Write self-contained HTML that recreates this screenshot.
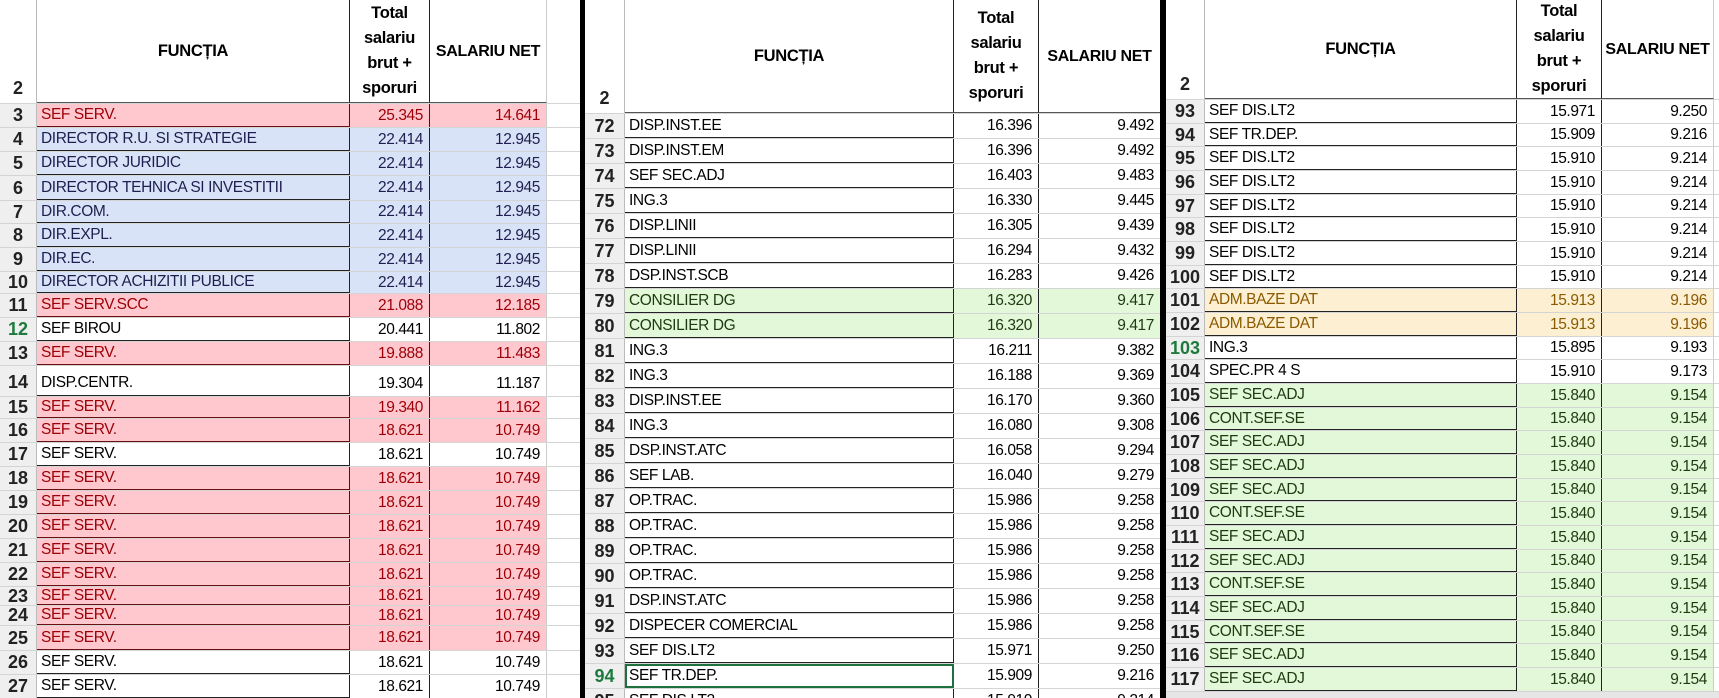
<!DOCTYPE html>
<html><head><meta charset="utf-8"><style>
*{margin:0;padding:0;box-sizing:border-box}
body{width:1719px;height:698px;overflow:hidden;background:#fff;font-family:"Liberation Sans",sans-serif;position:relative}
.p{position:absolute;top:0;height:698px;overflow:hidden;background:#fff}
.p1{left:0;width:581px}.p2{left:585px;width:575px}.p3{left:1166px;width:553px}
.sep{position:absolute;top:0;height:698px;width:5px;background:#000}
.r{position:absolute;left:0;right:0;border-bottom:1px solid #d4d4d4}
.r span{position:absolute;top:0;bottom:0;display:flex;align-items:center;font-size:15.5px;letter-spacing:-0.4px;white-space:nowrap}
.n{background:#efefef;color:#222;font-size:18px!important;letter-spacing:0!important;font-weight:bold;justify-content:center;border-right:1px solid #bbb}
.b{padding-left:4px;border-bottom:1px solid #222;border-right:1px solid #222}
.c,.d{justify-content:flex-end;padding-right:6px;border-right:1px solid #222}
.p1 .n{left:0;width:37px}.p1 .b{left:37px;width:313px}.p1 .c{left:350px;width:80px}.p1 .d{left:430px;width:117px;border-right:1px solid #ccc}
.p2 .n{left:0;width:40px}.p2 .b{left:40px;width:329px}.p2 .c{left:369px;width:85px}.p2 .d{left:454px;width:121px;border-right:none}
.p3 .n{left:0;width:39px}.p3 .b{left:39px;width:312px}.p3 .c{left:351px;width:85px}.p3 .d{left:436px;width:112px;border-right:1px solid #ccc}
.h span{font-weight:bold;font-size:16.5px;letter-spacing:-0.3px;justify-content:center;text-align:center;line-height:25px;background:#fff}
.h .n{align-items:flex-end;padding-bottom:2px}
.h .b,.h .c,.h .d{border-bottom:1px solid #555}
.h .b{padding-left:0}
.h .c{padding-right:0}
.h .d{padding-right:0;font-size:16px}
.pk span.b,.pk span.c,.pk span.d{background:#ffc7ce;color:#9c0006}
.pk span.b{border-bottom-color:#6b1010}
.bl span.b,.bl span.c,.bl span.d{background:#d9e3f7;color:#1f1f4f}
.gr span.b,.gr span.c,.gr span.d{background:#e3f8d8;color:#1e3a10}
.ye span.b,.ye span.c,.ye span.d{background:#fdf0d2;color:#8a5a00}
.sel{color:#1d7a3c!important}
.box{outline:2px solid #1f6f3f;outline-offset:-2px}
</style></head><body>

<div class="p p1">
<div class="r h" style="top:0;height:104px"><span class="n">2</span><span class="b">FUNCȚIA</span><span class="c">Total<br>salariu<br>brut +<br>sporuri</span><span class="d">SALARIU NET</span></div>
<div class="r pk" style="top:104px;height:24px"><span class="n">3</span><span class="b">SEF SERV.</span><span class="c">25.345</span><span class="d">14.641</span></div>
<div class="r bl" style="top:128px;height:24px"><span class="n">4</span><span class="b">DIRECTOR R.U. SI STRATEGIE</span><span class="c">22.414</span><span class="d">12.945</span></div>
<div class="r bl" style="top:152px;height:24px"><span class="n">5</span><span class="b">DIRECTOR JURIDIC</span><span class="c">22.414</span><span class="d">12.945</span></div>
<div class="r bl" style="top:176px;height:25px"><span class="n">6</span><span class="b">DIRECTOR TEHNICA SI INVESTITII</span><span class="c">22.414</span><span class="d">12.945</span></div>
<div class="r bl" style="top:201px;height:23px"><span class="n">7</span><span class="b">DIR.COM.</span><span class="c">22.414</span><span class="d">12.945</span></div>
<div class="r bl" style="top:224px;height:24px"><span class="n">8</span><span class="b">DIR.EXPL.</span><span class="c">22.414</span><span class="d">12.945</span></div>
<div class="r bl" style="top:248px;height:24px"><span class="n">9</span><span class="b">DIR.EC.</span><span class="c">22.414</span><span class="d">12.945</span></div>
<div class="r bl" style="top:272px;height:22px"><span class="n">10</span><span class="b">DIRECTOR ACHIZITII PUBLICE</span><span class="c">22.414</span><span class="d">12.945</span></div>
<div class="r pk" style="top:294px;height:24px"><span class="n">11</span><span class="b">SEF SERV.SCC</span><span class="c">21.088</span><span class="d">12.185</span></div>
<div class="r" style="top:318px;height:24px"><span class="n sel">12</span><span class="b">SEF BIROU</span><span class="c">20.441</span><span class="d">11.802</span></div>
<div class="r pk" style="top:342px;height:24px"><span class="n">13</span><span class="b">SEF SERV.</span><span class="c">19.888</span><span class="d">11.483</span></div>
<div class="r" style="top:366px;height:31px"><span class="n" style="align-items:flex-end;padding-bottom:3px">14</span><span class="b" style="align-items:flex-end;padding-bottom:3px">DISP.CENTR.</span><span class="c" style="align-items:flex-end;padding-bottom:3px">19.304</span><span class="d" style="align-items:flex-end;padding-bottom:3px">11.187</span></div>
<div class="r pk" style="top:397px;height:22px"><span class="n">15</span><span class="b">SEF SERV.</span><span class="c">19.340</span><span class="d">11.162</span></div>
<div class="r pk" style="top:419px;height:24px"><span class="n">16</span><span class="b">SEF SERV.</span><span class="c">18.621</span><span class="d">10.749</span></div>
<div class="r" style="top:443px;height:24px"><span class="n">17</span><span class="b">SEF SERV.</span><span class="c">18.621</span><span class="d">10.749</span></div>
<div class="r pk" style="top:467px;height:24px"><span class="n">18</span><span class="b">SEF SERV.</span><span class="c">18.621</span><span class="d">10.749</span></div>
<div class="r pk" style="top:491px;height:24px"><span class="n">19</span><span class="b">SEF SERV.</span><span class="c">18.621</span><span class="d">10.749</span></div>
<div class="r pk" style="top:515px;height:24px"><span class="n">20</span><span class="b">SEF SERV.</span><span class="c">18.621</span><span class="d">10.749</span></div>
<div class="r pk" style="top:539px;height:24px"><span class="n">21</span><span class="b">SEF SERV.</span><span class="c">18.621</span><span class="d">10.749</span></div>
<div class="r pk" style="top:563px;height:24px"><span class="n">22</span><span class="b">SEF SERV.</span><span class="c">18.621</span><span class="d">10.749</span></div>
<div class="r pk" style="top:587px;height:19px"><span class="n">23</span><span class="b">SEF SERV.</span><span class="c">18.621</span><span class="d">10.749</span></div>
<div class="r pk" style="top:606px;height:20px"><span class="n">24</span><span class="b">SEF SERV.</span><span class="c">18.621</span><span class="d">10.749</span></div>
<div class="r pk" style="top:626px;height:25px"><span class="n">25</span><span class="b">SEF SERV.</span><span class="c">18.621</span><span class="d">10.749</span></div>
<div class="r" style="top:651px;height:24px"><span class="n">26</span><span class="b">SEF SERV.</span><span class="c">18.621</span><span class="d">10.749</span></div>
<div class="r" style="top:675px;height:24px"><span class="n">27</span><span class="b">SEF SERV.</span><span class="c">18.621</span><span class="d">10.749</span></div>
</div>

<div class="sep" style="left:580px"></div>

<div class="p p2">
<div class="r h" style="top:0;height:114px"><span class="n">2</span><span class="b">FUNCȚIA</span><span class="c">Total<br>salariu<br>brut +<br>sporuri</span><span class="d">SALARIU NET</span></div>
<div class="r" style="top:114px;height:25px"><span class="n">72</span><span class="b">DISP.INST.EE</span><span class="c">16.396</span><span class="d">9.492</span></div>
<div class="r" style="top:139px;height:25px"><span class="n">73</span><span class="b">DISP.INST.EM</span><span class="c">16.396</span><span class="d">9.492</span></div>
<div class="r" style="top:164px;height:25px"><span class="n">74</span><span class="b">SEF SEC.ADJ</span><span class="c">16.403</span><span class="d">9.483</span></div>
<div class="r" style="top:189px;height:25px"><span class="n">75</span><span class="b">ING.3</span><span class="c">16.330</span><span class="d">9.445</span></div>
<div class="r" style="top:214px;height:25px"><span class="n">76</span><span class="b">DISP.LINII</span><span class="c">16.305</span><span class="d">9.439</span></div>
<div class="r" style="top:239px;height:25px"><span class="n">77</span><span class="b">DISP.LINII</span><span class="c">16.294</span><span class="d">9.432</span></div>
<div class="r" style="top:264px;height:25px"><span class="n">78</span><span class="b">DSP.INST.SCB</span><span class="c">16.283</span><span class="d">9.426</span></div>
<div class="r gr" style="top:289px;height:25px"><span class="n">79</span><span class="b">CONSILIER DG</span><span class="c">16.320</span><span class="d">9.417</span></div>
<div class="r gr" style="top:314px;height:25px"><span class="n">80</span><span class="b">CONSILIER DG</span><span class="c">16.320</span><span class="d">9.417</span></div>
<div class="r" style="top:339px;height:25px"><span class="n">81</span><span class="b">ING.3</span><span class="c">16.211</span><span class="d">9.382</span></div>
<div class="r" style="top:364px;height:25px"><span class="n">82</span><span class="b">ING.3</span><span class="c">16.188</span><span class="d">9.369</span></div>
<div class="r" style="top:389px;height:25px"><span class="n">83</span><span class="b">DISP.INST.EE</span><span class="c">16.170</span><span class="d">9.360</span></div>
<div class="r" style="top:414px;height:25px"><span class="n">84</span><span class="b">ING.3</span><span class="c">16.080</span><span class="d">9.308</span></div>
<div class="r" style="top:439px;height:25px"><span class="n">85</span><span class="b">DSP.INST.ATC</span><span class="c">16.058</span><span class="d">9.294</span></div>
<div class="r" style="top:464px;height:25px"><span class="n">86</span><span class="b">SEF LAB.</span><span class="c">16.040</span><span class="d">9.279</span></div>
<div class="r" style="top:489px;height:25px"><span class="n">87</span><span class="b">OP.TRAC.</span><span class="c">15.986</span><span class="d">9.258</span></div>
<div class="r" style="top:514px;height:25px"><span class="n">88</span><span class="b">OP.TRAC.</span><span class="c">15.986</span><span class="d">9.258</span></div>
<div class="r" style="top:539px;height:25px"><span class="n">89</span><span class="b">OP.TRAC.</span><span class="c">15.986</span><span class="d">9.258</span></div>
<div class="r" style="top:564px;height:25px"><span class="n">90</span><span class="b">OP.TRAC.</span><span class="c">15.986</span><span class="d">9.258</span></div>
<div class="r" style="top:589px;height:25px"><span class="n">91</span><span class="b">DSP.INST.ATC</span><span class="c">15.986</span><span class="d">9.258</span></div>
<div class="r" style="top:614px;height:25px"><span class="n">92</span><span class="b">DISPECER COMERCIAL</span><span class="c">15.986</span><span class="d">9.258</span></div>
<div class="r" style="top:639px;height:25px"><span class="n">93</span><span class="b">SEF DIS.LT2</span><span class="c">15.971</span><span class="d">9.250</span></div>
<div class="r" style="top:664px;height:25px"><span class="n sel">94</span><span class="b box">SEF TR.DEP.</span><span class="c">15.909</span><span class="d">9.216</span></div>
<div class="r" style="top:689px;height:25px"><span class="n">95</span><span class="b">SEF DIS.LT2</span><span class="c">15.910</span><span class="d">9.214</span></div>
</div>

<div class="sep" style="left:1160px;width:6px"></div>

<div class="p p3">
<div class="r h" style="top:0;height:100px"><span class="n">2</span><span class="b">FUNCȚIA</span><span class="c">Total<br>salariu<br>brut +<br>sporuri</span><span class="d">SALARIU NET</span></div>
<div class="r" style="top:100px;height:24px"><span class="n">93</span><span class="b">SEF DIS.LT2</span><span class="c">15.971</span><span class="d">9.250</span></div>
<div class="r" style="top:124px;height:23px"><span class="n">94</span><span class="b">SEF TR.DEP.</span><span class="c">15.909</span><span class="d">9.216</span></div>
<div class="r" style="top:147px;height:24px"><span class="n">95</span><span class="b">SEF DIS.LT2</span><span class="c">15.910</span><span class="d">9.214</span></div>
<div class="r" style="top:171px;height:24px"><span class="n">96</span><span class="b">SEF DIS.LT2</span><span class="c">15.910</span><span class="d">9.214</span></div>
<div class="r" style="top:195px;height:23px"><span class="n">97</span><span class="b">SEF DIS.LT2</span><span class="c">15.910</span><span class="d">9.214</span></div>
<div class="r" style="top:218px;height:24px"><span class="n">98</span><span class="b">SEF DIS.LT2</span><span class="c">15.910</span><span class="d">9.214</span></div>
<div class="r" style="top:242px;height:24px"><span class="n">99</span><span class="b">SEF DIS.LT2</span><span class="c">15.910</span><span class="d">9.214</span></div>
<div class="r" style="top:266px;height:23px"><span class="n">100</span><span class="b">SEF DIS.LT2</span><span class="c">15.910</span><span class="d">9.214</span></div>
<div class="r ye" style="top:289px;height:24px"><span class="n">101</span><span class="b">ADM.BAZE DAT</span><span class="c">15.913</span><span class="d">9.196</span></div>
<div class="r ye" style="top:313px;height:24px"><span class="n">102</span><span class="b">ADM.BAZE DAT</span><span class="c">15.913</span><span class="d">9.196</span></div>
<div class="r" style="top:337px;height:23px"><span class="n sel">103</span><span class="b">ING.3</span><span class="c">15.895</span><span class="d">9.193</span></div>
<div class="r" style="top:360px;height:24px"><span class="n">104</span><span class="b">SPEC.PR 4 S</span><span class="c">15.910</span><span class="d">9.173</span></div>
<div class="r gr" style="top:384px;height:24px"><span class="n">105</span><span class="b">SEF SEC.ADJ</span><span class="c">15.840</span><span class="d">9.154</span></div>
<div class="r gr" style="top:408px;height:23px"><span class="n">106</span><span class="b">CONT.SEF.SE</span><span class="c">15.840</span><span class="d">9.154</span></div>
<div class="r gr" style="top:431px;height:24px"><span class="n">107</span><span class="b">SEF SEC.ADJ</span><span class="c">15.840</span><span class="d">9.154</span></div>
<div class="r gr" style="top:455px;height:24px"><span class="n">108</span><span class="b">SEF SEC.ADJ</span><span class="c">15.840</span><span class="d">9.154</span></div>
<div class="r gr" style="top:479px;height:23px"><span class="n">109</span><span class="b">SEF SEC.ADJ</span><span class="c">15.840</span><span class="d">9.154</span></div>
<div class="r gr" style="top:502px;height:24px"><span class="n">110</span><span class="b">CONT.SEF.SE</span><span class="c">15.840</span><span class="d">9.154</span></div>
<div class="r gr" style="top:526px;height:24px"><span class="n">111</span><span class="b">SEF SEC.ADJ</span><span class="c">15.840</span><span class="d">9.154</span></div>
<div class="r gr" style="top:550px;height:23px"><span class="n">112</span><span class="b">SEF SEC.ADJ</span><span class="c">15.840</span><span class="d">9.154</span></div>
<div class="r gr" style="top:573px;height:24px"><span class="n">113</span><span class="b">CONT.SEF.SE</span><span class="c">15.840</span><span class="d">9.154</span></div>
<div class="r gr" style="top:597px;height:24px"><span class="n">114</span><span class="b">SEF SEC.ADJ</span><span class="c">15.840</span><span class="d">9.154</span></div>
<div class="r gr" style="top:621px;height:23px"><span class="n">115</span><span class="b">CONT.SEF.SE</span><span class="c">15.840</span><span class="d">9.154</span></div>
<div class="r gr" style="top:644px;height:24px"><span class="n">116</span><span class="b">SEF SEC.ADJ</span><span class="c">15.840</span><span class="d">9.154</span></div>
<div class="r gr" style="top:668px;height:24px"><span class="n">117</span><span class="b">SEF SEC.ADJ</span><span class="c">15.840</span><span class="d">9.154</span></div>
<div style="position:absolute;top:692px;left:0;right:0;height:6px;background:#e6e6e6"></div>
</div>
</body></html>
